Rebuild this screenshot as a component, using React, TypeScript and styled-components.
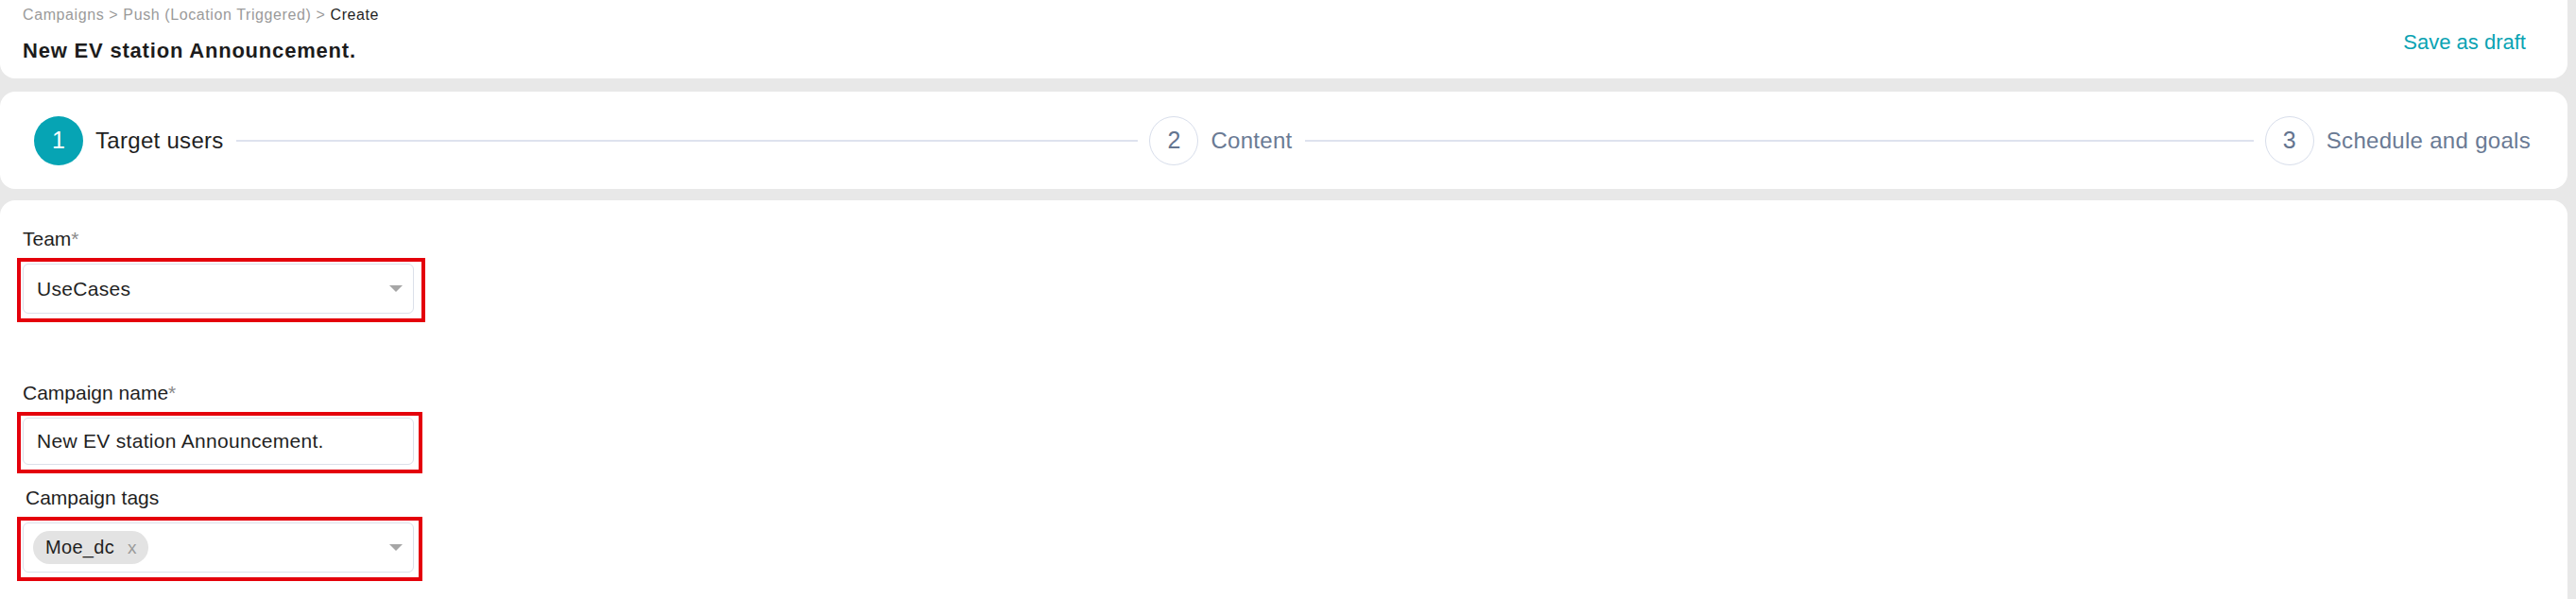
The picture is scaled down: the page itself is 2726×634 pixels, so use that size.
import React from "react";
import styled, { createGlobalStyle } from "styled-components";

const GlobalStyle = createGlobalStyle`
    html, body {
        margin: 0;
        padding: 0;
        background: #e8e8e8;
        font-family: "Liberation Sans", Arial, sans-serif;
    }
`;

// Layout
const Page = styled.div`
    min-height: 100vh;
    display: flex;
    flex-direction: column;
    padding-right: 9px;
    box-sizing: border-box;
`;

const HeaderCard = styled.div`
    height: 83px;
    background: #fff;
    border-radius: 0 0 16px 16px;
    display: flex;
    justify-content: space-between;
    padding: 0 44px 0 24px;
    box-sizing: border-box;
`;

const HeaderLeft = styled.div`
    display: flex;
    flex-direction: column;
    padding-top: 6px;
`;

const Breadcrumb = styled.div`
    font-size: 16px;
    line-height: 20px;
    letter-spacing: 0.6px;
    color: #9a9a9a;
`;

const Crumb = styled.span<{ $current?: boolean }>`
    color: ${(p) => (p.$current ? "#1f1f1f" : "#9a9a9a")};
`;

const Title = styled.h1`
    margin: 14px 0 0;
    font-size: 22px;
    line-height: 28px;
    font-weight: 600;
    letter-spacing: 0.8px;
    color: #1c1c1c;
`;

const DraftLink = styled.a`
    margin-top: 32px;
    font-size: 22px;
    line-height: 26px;
    color: #0aa3b3;
    cursor: pointer;
`;

const StepperCard = styled.div`
    margin-top: 14px;
    height: 103px;
    background: #fff;
    border-radius: 16px;
    display: flex;
    align-items: center;
    padding: 0 39px 0 36px;
    box-sizing: border-box;
`;

const Step = styled.div<{ $last?: boolean }>`
    display: flex;
    align-items: center;
    gap: 13px;
    flex: ${(p) => (p.$last ? "0 0 auto" : "1 1 0")};
    margin-right: ${(p) => (p.$last ? "0" : "12px")};
`;

const StepCircle = styled.div<{ $active?: boolean }>`
    width: 52px;
    height: 52px;
    border-radius: 50%;
    box-sizing: border-box;
    flex: none;
    display: flex;
    align-items: center;
    justify-content: center;
    font-size: 25px;
    background: ${(p) => (p.$active ? "#06a4b4" : "#fff")};
    border: ${(p) => (p.$active ? "none" : "1.5px solid #d8deeb")};
    color: ${(p) => (p.$active ? "#fff" : "#64748f")};
`;

const StepLabel = styled.span<{ $active?: boolean }>`
    font-size: 24px;
    letter-spacing: 0.3px;
    white-space: nowrap;
    color: ${(p) => (p.$active ? "#1f1f1f" : "#6a7a94")};
`;

const StepLine = styled.div`
    flex: 1;
    height: 2px;
    background: #dee2ee;
`;

const FormCard = styled.div`
    margin-top: 12px;
    flex: 1;
    background: #fff;
    border-radius: 16px 16px 0 0;
    padding: 28px 24px;
`;

const Field = styled.div<{ $space: number }>`
    display: flex;
    flex-direction: column;
    gap: 8px;
    margin-bottom: ${(p) => p.$space}px;
`;

const Label = styled.label<{ $indent?: number }>`
    font-size: 21px;
    line-height: 25px;
    color: #1f1f1f;
    padding-left: ${(p) => p.$indent ?? 0}px;
`;

const Required = styled.span`
    color: #8a8a8a;
`;

const Highlight = styled.div<{ $right: number }>`
    width: fit-content;
    margin-left: -6px;
    border: 4px solid #e4000b;
    padding: 2px ${(p) => p.$right}px 5px 2px;
`;

const InputBox = styled.div<{ $height: number; $pl: number }>`
    width: 414px;
    height: ${(p) => p.$height}px;
    box-sizing: border-box;
    border: 1px solid #dce0ea;
    border-radius: 6px;
    display: flex;
    align-items: center;
    justify-content: space-between;
    padding: 0 11px 0 ${(p) => p.$pl}px;
    font-size: 21px;
    letter-spacing: 0.3px;
    color: #1f1f1f;
`;

const Caret = styled.span`
    width: 0;
    height: 0;
    border-left: 7.5px solid transparent;
    border-right: 7.5px solid transparent;
    border-top: 7px solid #a6a6a6;
`;

const Chip = styled.span`
    height: 35px;
    display: inline-flex;
    align-items: center;
    gap: 14px;
    padding: 0 12px 0 13px;
    border-radius: 18px;
    background: #e3e3e3;
    font-size: 20px;
    color: #1f1f1f;
`;

const ChipClose = styled.span`
    font-size: 19px;
    color: #9a9a9a;
`;

const steps = ["Target users", "Content", "Schedule and goals"];

const App = () => {
    return (
        <>
            <GlobalStyle />
            <Page>
                <HeaderCard>
                    <HeaderLeft>
                        <Breadcrumb>
                            <Crumb>Campaigns &gt; Push (Location Triggered) &gt; </Crumb>
                            <Crumb $current>Create</Crumb>
                        </Breadcrumb>
                        <Title>New EV station Announcement.</Title>
                    </HeaderLeft>
                    <DraftLink>Save as draft</DraftLink>
                </HeaderCard>

                <StepperCard>
                    {steps.map((label, i) => {
                        const last = i === steps.length - 1;
                        return (
                            <Step key={label} $last={last}>
                                <StepCircle $active={i === 0}>{i + 1}</StepCircle>
                                <StepLabel $active={i === 0}>{label}</StepLabel>
                                {!last && <StepLine />}
                            </Step>
                        );
                    })}
                </StepperCard>

                <FormCard>
                    <Field $space={62}>
                        <Label>
                            Team<Required>*</Required>
                        </Label>
                        <Highlight $right={8}>
                            <InputBox $height={53} $pl={14}>
                                <span>UseCases</span>
                                <Caret />
                            </InputBox>
                        </Highlight>
                    </Field>

                    <Field $space={13}>
                        <Label>
                            Campaign name<Required>*</Required>
                        </Label>
                        <Highlight $right={5}>
                            <InputBox $height={50} $pl={14}>
                                <span>New EV station Announcement.</span>
                            </InputBox>
                        </Highlight>
                    </Field>

                    <Field $space={0}>
                        <Label $indent={3}>Campaign tags</Label>
                        <Highlight $right={5}>
                            <InputBox $height={53} $pl={10}>
                                <Chip>
                                    Moe_dc<ChipClose>x</ChipClose>
                                </Chip>
                                <Caret />
                            </InputBox>
                        </Highlight>
                    </Field>
                </FormCard>
            </Page>
        </>
    );
};

export default App;
